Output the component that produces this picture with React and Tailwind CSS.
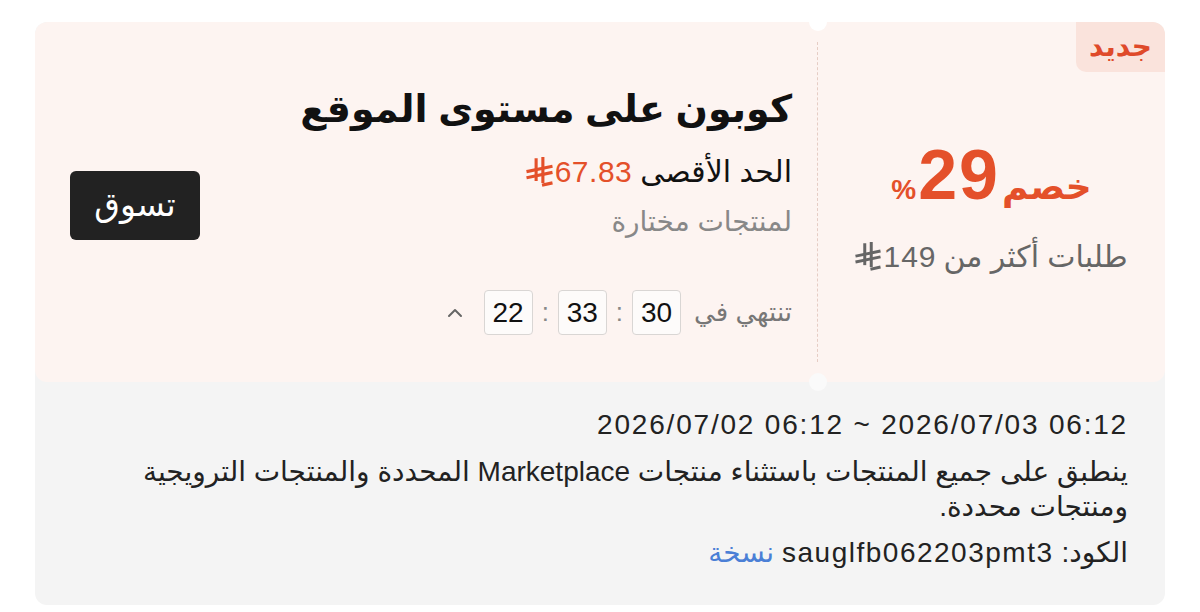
import { ChevronUp } from 'lucide-react';

// new Saudi riyal sign, drawn since no installed font carries it
function Riyal({ className }) {
  return (
    <svg viewBox="0 0 20 22" className={className} fill="none" stroke="currentColor" strokeWidth="2.3" strokeLinecap="square">
      <path d="M7.5 2v14.5" />
      <path d="M12.5 1v17" />
      <path d="M1.5 10.5l17-3.5" />
      <path d="M1.5 15l17-3.5" />
      <path d="M13 20.5l5.5-1.2" />
    </svg>
  );
}

function TimeBox({ value }) {
  return (
    <div className="w-[49px] h-[45px] flex items-center justify-center rounded-[4px] border border-[#d9d6d4] bg-[#fdfbfa] text-[28px] text-[#111]">
      {value}
    </div>
  );
}

export default function App() {
  return (
    <div
      dir="rtl"
      className="min-h-screen bg-white pt-[22px] px-[35px]"
      style={{ fontFamily: '"Liberation Sans", "DejaVu Sans", sans-serif' }}
    >
      <div className="rounded-xl bg-[#f4f4f4] overflow-hidden">
        {/* coupon body */}
        <div className="relative flex h-[360px] rounded-xl bg-[#fdf4f1]">
          {/* discount stub */}
          <div className="relative w-[347px] flex flex-col items-center justify-center pt-[14px]">
            <div className="absolute top-0 right-0 w-[89px] h-[50px] flex items-center justify-center rounded-bl-[10px] rounded-tr-xl bg-[#fae3dc] text-[28px] font-bold text-[#df4a2a]">
              جديد
            </div>
            <div className="flex items-baseline text-[#e4502a] font-bold">
              <span className="text-[36px]">خصم</span>
              <span className="text-[70px] leading-none tracking-[2px] mx-[2px]">29</span>
              <span className="text-[28px]">%</span>
            </div>
            <div className="mt-[20px] flex items-center gap-[7px] text-[30px] text-[#666]">
              <span>طلبات أكثر من</span>
              <span className="tracking-[1px]">149</span>
              <Riyal className="w-[26px] h-[29px] -mr-[5px]" />
            </div>
          </div>

          {/* perforated divider */}
          <div className="relative flex py-[20px]">
            <div className="border-l border-dashed border-[#e6cdc5]" />
            <div className="absolute -top-[9px] -right-[9px] w-[18px] h-[18px] rounded-full bg-white" />
            <div className="absolute -bottom-[9px] -right-[9px] w-[18px] h-[18px] rounded-full bg-[#fafafa]" />
          </div>

          {/* coupon details */}
          <div className="flex-1 flex items-start justify-between pr-[25px] pl-[35px]">
            <div className="flex flex-col items-start pt-[64px]">
              <h1 className="text-[38px] leading-[46px] font-bold text-[#111]">كوبون على مستوى الموقع</h1>
              <div className="mt-[21px] flex items-center gap-[8px] text-[30px] leading-[38px]">
                <span className="text-[#111]">الحد الأقصى</span>
                <span className="text-[#e4502a] tracking-[0.5px]">67.83</span>
                <Riyal className="w-[27px] h-[30px] -mr-[6px] text-[#e4502a]" />
              </div>
              <div className="mt-[13px] text-[28px] leading-[36px] text-[#888]">لمنتجات مختارة</div>
              <div className="mt-[50px] flex items-center gap-[9px] text-[26px] text-[#777]">
                <span className="ml-[4px]">تنتهي في</span>
                <TimeBox value="30" />
                <span className="text-[#888]">:</span>
                <TimeBox value="33" />
                <span className="text-[#888]">:</span>
                <TimeBox value="22" />
                <ChevronUp className="w-[24px] h-[24px] mr-[8px] text-[#666]" strokeWidth={2} />
              </div>
            </div>
            <button className="self-center mt-[6px] w-[130px] h-[69px] rounded-[6px] bg-[#222] text-white text-[33px]">
              تسوق
            </button>
          </div>
        </div>

        {/* terms */}
        <div className="px-[37px] pt-[25px] pb-[34px] text-[28px] text-[#222]">
          <div dir="ltr" className="text-right leading-[36px] tracking-[1.8px]">2026/07/02 06:12 ~ 2026/07/03 06:12</div>
          <p className="mt-[11px] leading-[35px]">
            ينطبق على جميع المنتجات باستثناء منتجات Marketplace المحددة والمنتجات الترويجية ومنتجات محددة.
          </p>
          <div className="mt-[11px] flex items-center gap-[8px] leading-[36px]">
            <span>الكود:</span>
            <span className="tracking-[1.5px]">sauglfb062203pmt3</span>
            <span className="text-[#4a7fd6]">نسخة</span>
          </div>
        </div>
      </div>
    </div>
  );
}
